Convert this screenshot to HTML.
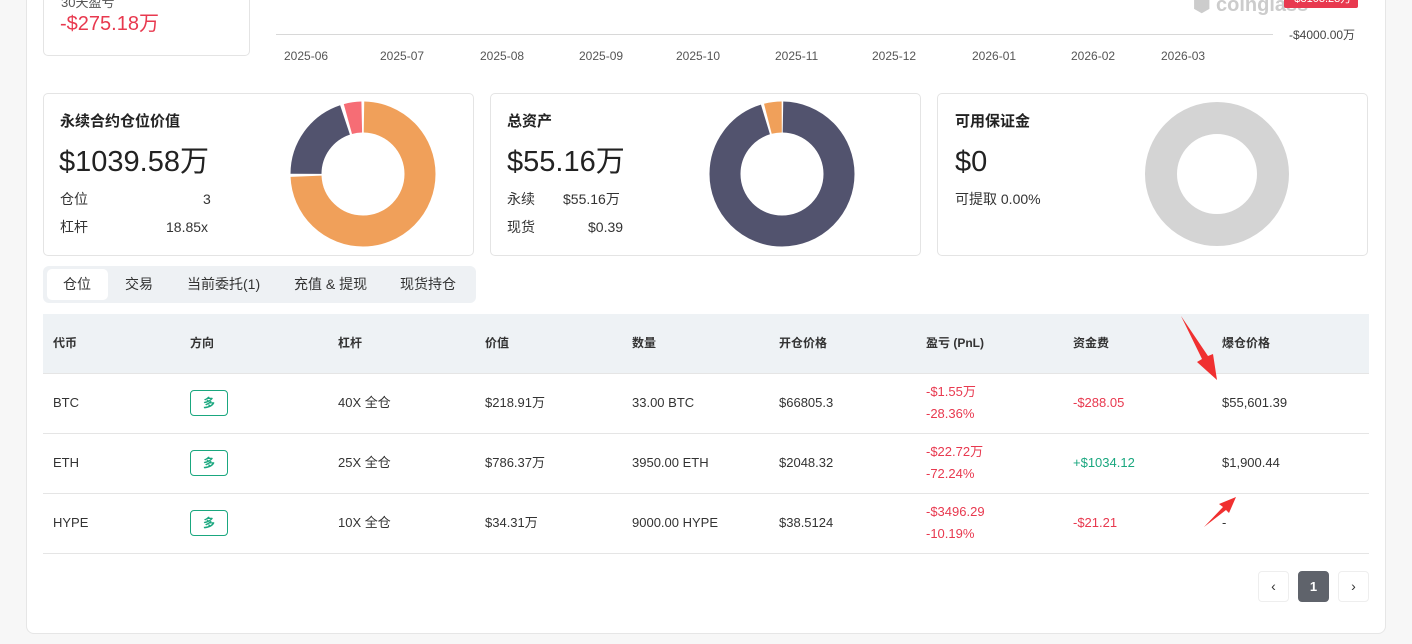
<!DOCTYPE html>
<html><head><meta charset="utf-8"><style>
*{margin:0;padding:0;box-sizing:border-box}
body{width:1412px;height:644px;background:#f7f7f7;font-family:"Liberation Sans","Noto Sans CJK SC",sans-serif;color:#333;position:relative;overflow:hidden}
.a{position:absolute;white-space:nowrap}
.panel{position:absolute;left:26px;top:-20px;width:1360px;height:654px;background:#fff;border:1px solid #e6e6e6;border-radius:8px}
.card{position:absolute;top:93px;width:431px;height:163px;border:1px solid #e4e4e4;border-radius:5px;background:#fff}
.ct{font-size:15px;font-weight:bold;color:#222;line-height:20px}
.big{font-size:29px;color:#222;line-height:36px}
.lbl{font-size:14px;color:#333;line-height:18px}
.th{font-size:12px;font-weight:bold;color:#333;line-height:16px}
.td{font-size:13px;color:#333;line-height:16px}
.red{color:#e8394f}.grn{color:#1aa77f}
.tag{position:absolute;width:38px;height:26px;border:1px solid #1aa77f;border-radius:4px;color:#1aa77f;font-size:12px;font-weight:bold;text-align:center;line-height:24px}
.hl{position:absolute;left:43px;width:1326px;height:1px;background:#e5e5e5}
.pg{position:absolute;top:571px;width:31px;height:31px;border:1px solid #eee;border-radius:4px;text-align:center;line-height:29px;font-size:14px;color:#333}
</style></head><body>
<div class="panel"></div>
<div class="a" style="left:43px;top:-10px;width:207px;height:66px;border:1px solid #e4e4e4;border-radius:5px;background:#fff"></div>
<div class="a" style="left:61px;top:-8px;font-size:13px;color:#555">30天盈亏</div>
<div class="a red" style="left:60px;top:11px;font-size:20px;line-height:26px">-$275.18万</div>
<div class="a" style="left:276px;top:34px;width:997px;height:1px;background:#d8d8d8"></div>
<div class="a" style="left:1193px;top:-8px;font-size:20px;color:#ccc;font-weight:bold">⬢ coinglass</div>
<div class="a" style="left:1284px;top:-6px;width:74px;height:14px;background:#e8394f;border-radius:2px;color:#fff;font-size:11px;text-align:center;line-height:10px">-$3103.23万</div>
<div class="a" style="left:1289px;top:27px;font-size:12px;color:#444;line-height:16px">-$4000.00万</div>
<div class="a" style="top:49px;left:284px;font-size:12px;color:#555">
<span style="position:absolute;left:0">2025-06</span><span style="position:absolute;left:96px">2025-07</span><span style="position:absolute;left:196px">2025-08</span><span style="position:absolute;left:295px">2025-09</span><span style="position:absolute;left:392px">2025-10</span><span style="position:absolute;left:491px">2025-11</span><span style="position:absolute;left:588px">2025-12</span><span style="position:absolute;left:688px">2026-01</span><span style="position:absolute;left:787px">2026-02</span><span style="position:absolute;left:877px">2026-03</span></div>

<div class="card" style="left:43px"></div>
<div class="card" style="left:490px"></div>
<div class="card" style="left:937px"></div>
<div class="a ct" style="left:60px;top:112px">永续合约仓位价值</div>
<div class="a big" style="left:59px;top:144px">$1039.58万</div>
<div class="a lbl" style="left:60px;top:190px">仓位</div><div class="a lbl" style="left:203px;top:190px">3</div>
<div class="a lbl" style="left:60px;top:218px">杠杆</div><div class="a lbl" style="left:166px;top:218px">18.85x</div>

<div class="a ct" style="left:507px;top:112px">总资产</div>
<div class="a big" style="left:507px;top:144px">$55.16万</div>
<div class="a lbl" style="left:507px;top:190px">永续</div><div class="a lbl" style="left:563px;top:190px">$55.16万</div>
<div class="a lbl" style="left:507px;top:218px">现货</div><div class="a lbl" style="left:588px;top:218px">$0.39</div>

<div class="a ct" style="left:955px;top:112px">可用保证金</div>
<div class="a big" style="left:955px;top:144px">$0</div>
<div class="a lbl" style="left:955px;top:190px">可提取 0.00%</div>

<svg class="a" style="left:0;top:0" width="1412" height="300">
<g transform="translate(363,174) rotate(-90)" fill="none" stroke-width="31">
<circle r="57" stroke="#f0a05a" stroke-dasharray="265 400" stroke-dashoffset="-1"/>
<circle r="57" stroke="#52536e" stroke-dasharray="71 400" stroke-dashoffset="-268.5"/>
<circle r="57" stroke="#f66d75" stroke-dasharray="14 400" stroke-dashoffset="-342.5"/>
</g>
<g transform="translate(782,174) rotate(-90)" fill="none" stroke-width="31">
<circle r="57" stroke="#52536e" stroke-dasharray="340 400" stroke-dashoffset="-1"/>
<circle r="57" stroke="#f0a05a" stroke-dasharray="14 400" stroke-dashoffset="-343.5"/>
</g>
<circle cx="1217" cy="174" r="56" fill="none" stroke="#d4d4d4" stroke-width="32"/>
</svg>

<div class="a" style="left:43px;top:266px;width:433px;height:37px;background:#eef1f4;border-radius:6px"></div>
<div class="a" style="left:47px;top:269px;width:61px;height:31px;background:#fff;border-radius:5px"></div>
<div class="a lbl" style="left:63px;top:275px">仓位</div>
<div class="a lbl" style="left:125px;top:275px">交易</div>
<div class="a lbl" style="left:187px;top:275px">当前委托(1)</div>
<div class="a lbl" style="left:294px;top:275px">充值 &amp; 提现</div>
<div class="a lbl" style="left:400px;top:275px">现货持仓</div>

<div class="a" style="left:43px;top:314px;width:1326px;height:59px;background:#eef2f5"></div>
<div class="hl" style="top:373px"></div><div class="hl" style="top:433px"></div><div class="hl" style="top:493px"></div><div class="hl" style="top:553px"></div>
<div class="a th" style="left:53px;top:335px">代币</div>
<div class="a th" style="left:190px;top:335px">方向</div>
<div class="a th" style="left:338px;top:335px">杠杆</div>
<div class="a th" style="left:485px;top:335px">价值</div>
<div class="a th" style="left:632px;top:335px">数量</div>
<div class="a th" style="left:779px;top:335px">开仓价格</div>
<div class="a th" style="left:926px;top:335px">盈亏 (PnL)</div>
<div class="a th" style="left:1073px;top:335px">资金费</div>
<div class="a th" style="left:1222px;top:335px">爆仓价格</div>

<div class="a td" style="left:53px;top:395px">BTC</div>
<div class="tag" style="left:190px;top:390px">多</div>
<div class="a td" style="left:338px;top:395px">40X 全仓</div>
<div class="a td" style="left:485px;top:395px">$218.91万</div>
<div class="a td" style="left:632px;top:395px">33.00 BTC</div>
<div class="a td" style="left:779px;top:395px">$66805.3</div>
<div class="a td red" style="left:926px;top:384px">-$1.55万</div>
<div class="a td red" style="left:926px;top:406px">-28.36%</div>
<div class="a td red" style="left:1073px;top:395px">-$288.05</div>
<div class="a td" style="left:1222px;top:395px">$55,601.39</div>

<div class="a td" style="left:53px;top:455px">ETH</div>
<div class="tag" style="left:190px;top:450px">多</div>
<div class="a td" style="left:338px;top:455px">25X 全仓</div>
<div class="a td" style="left:485px;top:455px">$786.37万</div>
<div class="a td" style="left:632px;top:455px">3950.00 ETH</div>
<div class="a td" style="left:779px;top:455px">$2048.32</div>
<div class="a td red" style="left:926px;top:444px">-$22.72万</div>
<div class="a td red" style="left:926px;top:466px">-72.24%</div>
<div class="a td grn" style="left:1073px;top:455px">+$1034.12</div>
<div class="a td" style="left:1222px;top:455px">$1,900.44</div>

<div class="a td" style="left:53px;top:515px">HYPE</div>
<div class="tag" style="left:190px;top:510px">多</div>
<div class="a td" style="left:338px;top:515px">10X 全仓</div>
<div class="a td" style="left:485px;top:515px">$34.31万</div>
<div class="a td" style="left:632px;top:515px">9000.00 HYPE</div>
<div class="a td" style="left:779px;top:515px">$38.5124</div>
<div class="a td red" style="left:926px;top:504px">-$3496.29</div>
<div class="a td red" style="left:926px;top:526px">-10.19%</div>
<div class="a td red" style="left:1073px;top:515px">-$21.21</div>
<div class="a td" style="left:1222px;top:515px">-</div>

<div class="pg" style="left:1258px">&lsaquo;</div>
<div class="pg" style="left:1298px;background:#5f636b;border-color:#5f636b;color:#fff;font-weight:bold;font-size:13px">1</div>
<div class="pg" style="left:1338px">&rsaquo;</div>

<svg class="a" style="left:0;top:0" width="1412" height="644">
<polygon points="1181,316 1208,356 1213,354 1217,380 1197,362 1202,359" fill="#f03030"/>
<polygon points="1204,527 1223,507 1219,504 1236,497 1229,513 1226,510" fill="#f03030"/>
</svg>
</body></html>
